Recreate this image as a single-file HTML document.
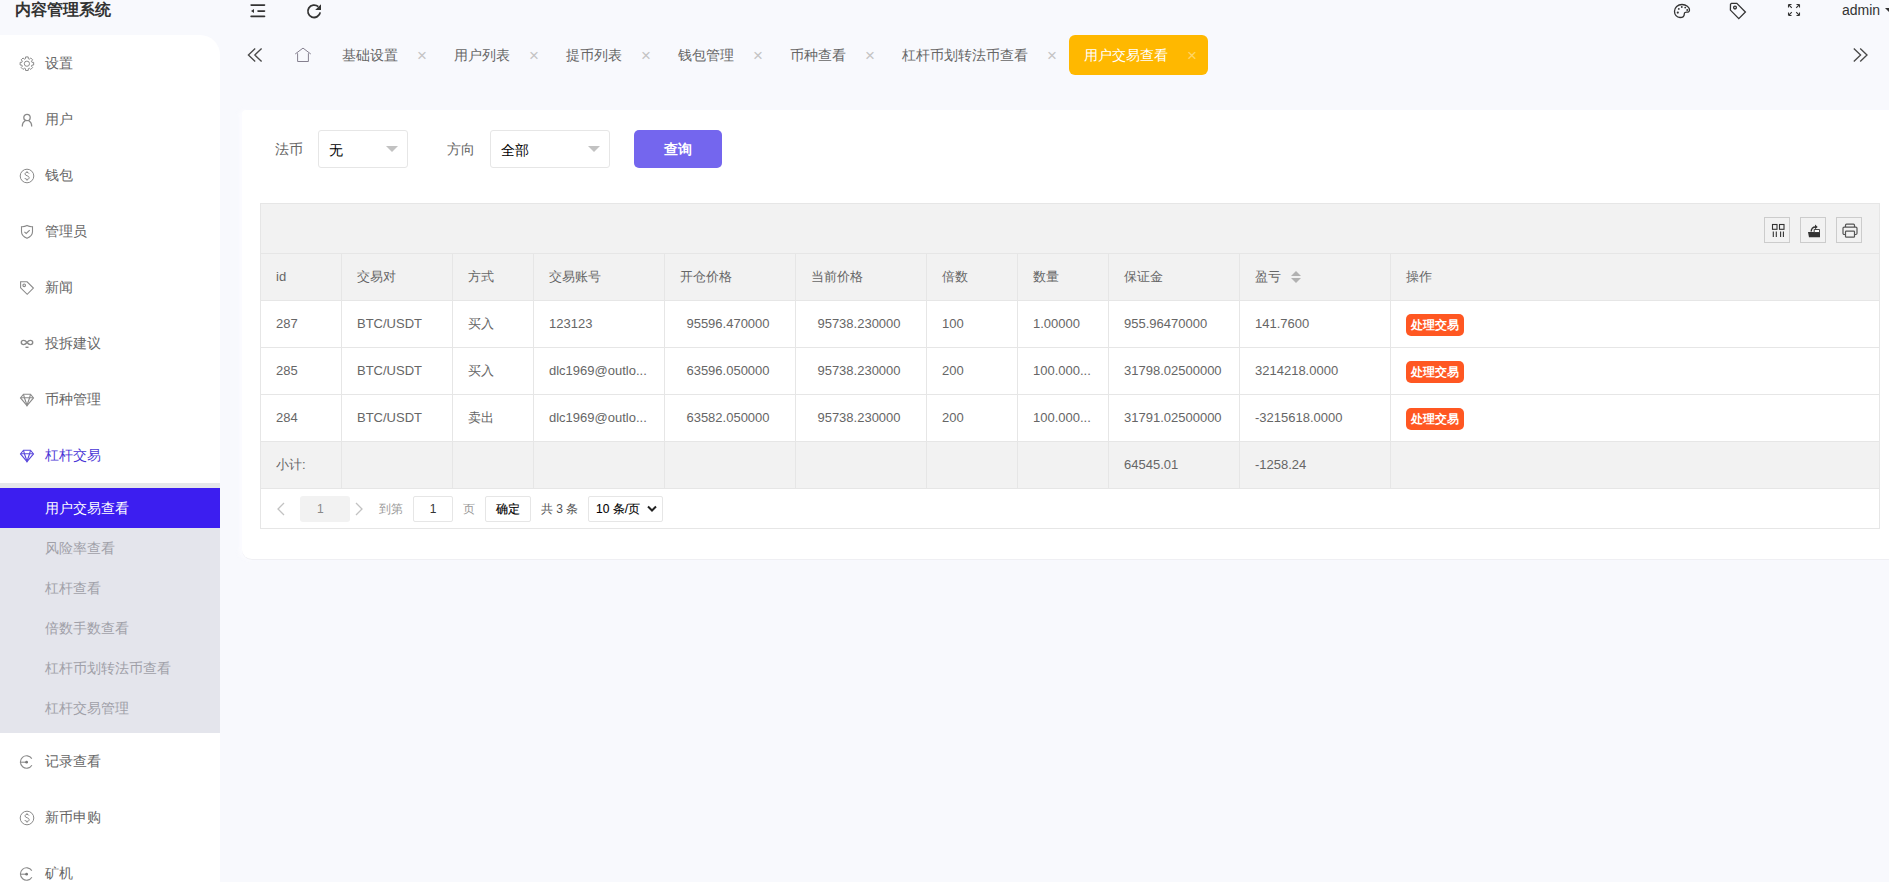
<!DOCTYPE html>
<html><head><meta charset="utf-8"><style>
*{margin:0;padding:0;box-sizing:border-box}
html,body{width:1889px;height:882px;overflow:hidden;background:#f8f9fd;font-family:"Liberation Sans",sans-serif;font-size:14px;color:#666}
div,span{position:absolute}
.nw{white-space:nowrap}
#title{left:15px;top:-1px;font-size:16px;font-weight:bold;color:#333;line-height:22px}
#side{left:0;top:35px;width:220px;height:847px;background:#fff;border-top-right-radius:20px}
.mt{left:45px;line-height:20px;color:#666;white-space:nowrap}
.ic{left:0;top:0}
#sub{left:0;top:483px;width:220px;height:250px;background:#e4e5ec}
#subtop{left:0;top:483px;width:220px;height:5px;background:#e6e7ea}
#subact{left:0;top:488px;width:220px;height:40px;background:#3c1ef0}
.si{left:45px;white-space:nowrap;color:#a0a0a8;line-height:20px}
.tt{top:45px;line-height:20px;white-space:nowrap;color:#666}
.tx{top:46px;line-height:20px;color:#c4c4c4;font-size:17px}
#acttab{left:1069px;top:35px;width:139px;height:40px;background:#ffb800;border-radius:6px}
#card{left:242px;top:110px;width:1700px;height:450px;background:#fff;border-top-left-radius:4px;border-bottom-left-radius:10px;border-bottom:1px solid #efeff3;box-shadow:-3px 0 4px rgba(252,252,255,.9)}
.lbl{top:139px;line-height:20px;color:#666;white-space:nowrap}
.sel{top:130px;height:38px;border:1px solid #e6e6e6;border-radius:3px;background:#fff}
.sel .v{left:10px;top:9px;line-height:20px;color:#000;white-space:nowrap}
.tri{top:15px;width:0;height:0;border-left:6px solid transparent;border-right:6px solid transparent;border-top:6px solid #c2c2c2}
#btn{left:634px;top:130px;width:88px;height:38px;background:#7466ee;border-radius:5px;color:#fff;font-weight:bold;text-align:center;line-height:38px}
.hl{height:1px;background:#e6e6e6}
.vl{width:1px;background:#e6e6e6}
.bgg{background:#f2f2f2}
.ct{font-size:13px;line-height:20px;color:#666;white-space:nowrap}
.op{height:22px;width:58px;line-height:22px;background:#ff5722;color:#fff;border-radius:5px;font-size:12px;font-weight:bold;text-align:center}
.tb{top:217px;width:26px;height:26px;border:1px solid #ccc;background:#f2f2f2}
</style></head><body>
<div id="title" class="nw">内容管理系统</div>
<div id="side"></div>
<svg width="16" height="16" viewBox="0 0 16 16" style="position:absolute;left:19px;top:56px"><g fill="none" stroke="#8a8a8a" stroke-width="1"><path d="M12.90 6.27 L14.67 6.38 L14.67 9.02 L12.90 9.13 L12.45 10.22 L13.62 11.56 L11.76 13.42 L10.42 12.25 L9.33 12.70 L9.22 14.47 L6.58 14.47 L6.47 12.70 L5.38 12.25 L4.04 13.42 L2.18 11.56 L3.35 10.22 L2.90 9.13 L1.13 9.02 L1.13 6.38 L2.90 6.27 L3.35 5.18 L2.18 3.84 L4.04 1.98 L5.38 3.15 L6.47 2.70 L6.58 0.93 L9.22 0.93 L9.33 2.70 L10.42 3.15 L11.76 1.98 L13.62 3.84 L12.45 5.18Z"/><circle cx="7.9" cy="7.7" r="2.6"/></g></svg>
<div class="mt" style="top:53px">设置</div>
<svg width="16" height="16" viewBox="0 0 16 16" style="position:absolute;left:19px;top:112px"><g fill="none" stroke="#8a8a8a" stroke-width="1.3"><circle cx="8" cy="5.5" r="3.2"/><path d="M3.3 14.5c0-3 1.5-5 3-5.6M12.7 14.5c0-3-1.5-5-3-5.6"/></g></svg>
<div class="mt" style="top:109px">用户</div>
<svg width="16" height="16" viewBox="0 0 16 16" style="position:absolute;left:19px;top:168px"><g fill="none" stroke="#8a8a8a" stroke-width="1"><circle cx="8" cy="8" r="6.8"/><path d="M10 5.6c-.3-.8-1-1.2-2-1.2-1.2 0-2 .6-2 1.6 0 2 4.2 1.4 4.2 3.7 0 1-.9 1.7-2.2 1.7-1.1 0-1.9-.5-2.2-1.4M8 3.2v1.2M8 11.4v1.3"/></g></svg>
<div class="mt" style="top:165px">钱包</div>
<svg width="16" height="16" viewBox="0 0 16 16" style="position:absolute;left:19px;top:224px"><g fill="none" stroke="#8a8a8a" stroke-width="1.1"><path d="M8 1.5c1.6.9 3.5 1.3 5.5 1.2v5c0 3-2.3 5.2-5.5 6.6C4.8 12.9 2.5 10.7 2.5 7.7v-5c2 .1 3.9-.3 5.5-1.2z"/><path d="M5.4 7.9l1.8 1.6 3.5-3.4"/></g></svg>
<div class="mt" style="top:221px">管理员</div>
<svg width="16" height="16" viewBox="0 0 16 16" style="position:absolute;left:19px;top:280px"><g fill="none" stroke="#8a8a8a" stroke-width="1.1"><path d="M1.6 1.8h6.5l6.3 6.3-6.2 6.2-6.6-6.5z"/><circle cx="5.2" cy="5.3" r="1.3"/></g></svg>
<div class="mt" style="top:277px">新闻</div>
<svg width="16" height="16" viewBox="0 0 16 16" style="position:absolute;left:19px;top:336px"><g fill="none" stroke="#8a8a8a" stroke-width="1.4"><path d="M8 6.5C6.9 5 5.9 4.4 4.6 4.4 3.3 4.4 2.3 5.3 2.3 6.5s1 2.1 2.3 2.1c1.3 0 2.3-.6 3.4-2.1s2.1-2.1 3.4-2.1c1.3 0 2.3.9 2.3 2.1s-1 2.1-2.3 2.1C10.1 8.6 9.1 8 8 6.5z"/><path d="M6.5 11.3h3"/></g></svg>
<div class="mt" style="top:333px">投拆建议</div>
<svg width="16" height="16" viewBox="0 0 16 16" style="position:absolute;left:19px;top:392px"><g fill="none" stroke="#8a8a8a" stroke-width="1.1"><path d="M4.5 2.2h7l3 3.7L8 13.6 1.5 5.9z"/><path d="M1.8 5.8h12.4M5.4 5.8L8 13.3l2.6-7.5M4.5 2.5l1 3.3M11.5 2.5l-1 3.3"/></g></svg>
<div class="mt" style="top:389px">币种管理</div>
<svg width="16" height="16" viewBox="0 0 16 16" style="position:absolute;left:19px;top:448px"><g fill="none" stroke="#5a48dc" stroke-width="1.1"><path d="M4.5 2.2h7l3 3.7L8 13.6 1.5 5.9z"/><path d="M1.8 5.8h12.4M5.4 5.8L8 13.3l2.6-7.5M4.5 2.5l1 3.3M11.5 2.5l-1 3.3"/></g></svg>
<div class="mt" style="top:445px;color:#4a36d6">杠杆交易</div>
<div id="sub"></div><div id="subtop"></div><div id="subact"></div>
<div class="si" style="top:498px;color:#fff">用户交易查看</div>
<div class="si" style="top:538px">风险率查看</div>
<div class="si" style="top:578px">杠杆查看</div>
<div class="si" style="top:618px">倍数手数查看</div>
<div class="si" style="top:658px">杠杆币划转法币查看</div>
<div class="si" style="top:698px">杠杆交易管理</div>
<svg width="16" height="16" viewBox="0 0 16 16" style="position:absolute;left:19px;top:754px"><g fill="none" stroke="#8a8a8a" stroke-width="1.1"><path d="M12.8 4.6A6.2 6.2 0 1 0 12.9 11.2"/><path d="M1.6 8.2h5.2"/></g><circle cx="7.6" cy="8.2" r="1.4" fill="#777"/></svg>
<div class="mt" style="top:751px">记录查看</div>
<svg width="16" height="16" viewBox="0 0 16 16" style="position:absolute;left:19px;top:810px"><g fill="none" stroke="#8a8a8a" stroke-width="1"><circle cx="8" cy="8" r="6.8"/><path d="M10 5.6c-.3-.8-1-1.2-2-1.2-1.2 0-2 .6-2 1.6 0 2 4.2 1.4 4.2 3.7 0 1-.9 1.7-2.2 1.7-1.1 0-1.9-.5-2.2-1.4M8 3.2v1.2M8 11.4v1.3"/></g></svg>
<div class="mt" style="top:807px">新币申购</div>
<svg width="16" height="16" viewBox="0 0 16 16" style="position:absolute;left:19px;top:866px"><g fill="none" stroke="#8a8a8a" stroke-width="1.1"><path d="M12.8 4.6A6.2 6.2 0 1 0 12.9 11.2"/><path d="M1.6 8.2h5.2"/></g><circle cx="7.6" cy="8.2" r="1.4" fill="#777"/></svg>
<div class="mt" style="top:863px">矿机</div>
<svg width="18" height="18" viewBox="0 0 18 18" style="position:absolute;left:249px;top:0px"><g fill="#333"><rect x="1.3" y="4.2" width="15" height="1.7" rx=".8"/><rect x="8.2" y="10.2" width="8.1" height="1.7" rx=".8"/><rect x="1.3" y="15.6" width="15" height="1.7" rx=".8"/><path d="M2 11l3-2.1v4.2z"/></g></svg>
<svg width="18" height="18" viewBox="0 0 18 18" style="position:absolute;left:305px;top:2px"><g fill="none" stroke="#333" stroke-width="1.8"><path d="M15.2 10.3a6.2 6.2 0 1 1-1.9-5.6"/></g><path d="M16 2.2v5.8h-5.8z" fill="#333"/></svg>
<svg width="20" height="20" viewBox="0 0 20 20" style="position:absolute;left:1672px;top:1px"><g fill="none" stroke="#333" stroke-width="1.3"><path d="M10 3.5c4.3 0 7.5 2.7 7.5 5.6 0 1.6-1.2 2.2-2.6 2.1-1.5-.1-2.6.4-2.6 1.7 0 1.9-1.3 3.6-4.3 3.6-3.3 0-5.5-2.7-5.5-6.3C2.5 6.4 5.7 3.5 10 3.5z"/></g><g fill="#333"><circle cx="5.8" cy="11.6" r="1.1"/><circle cx="6.8" cy="7.9" r=".9"/><circle cx="9.8" cy="6" r=".9"/><circle cx="13.2" cy="6.6" r=".9"/><circle cx="15.2" cy="9" r=".9"/></g></svg>
<svg width="20" height="20" viewBox="0 0 20 20" style="position:absolute;left:1728px;top:1px"><g fill="none" stroke="#333" stroke-width="1.3"><path d="M2.5 3.2l1-.9h5.3l8.6 8.7-6.6 6.6-8.4-8.5z"/><circle cx="7" cy="6.6" r="1.4"/></g></svg>
<svg width="16" height="16" viewBox="0 0 16 16" style="position:absolute;left:1786px;top:2px"><g fill="none" stroke="#333" stroke-width="1.1"><path d="M2.5 2.5l3.3 3.3M2.5 2.5h3M2.5 2.5v3M13.5 2.5l-3.3 3.3M13.5 2.5h-3M13.5 2.5v3M2.5 13.5l3.3-3.3M2.5 13.5h3M2.5 13.5v-3M13.5 13.5l-3.3-3.3M13.5 13.5h-3M13.5 13.5v-3"/></g></svg>
<div class="nw" style="left:1842px;top:0px;line-height:20px;color:#333">admin</div>
<div style="left:1885px;top:8px;width:0;height:0;border-left:4px solid transparent;border-right:4px solid transparent;border-top:4px solid #333"></div>
<svg width="18" height="18" viewBox="0 0 18 18" style="position:absolute;left:246px;top:47px"><g fill="none" stroke="#4a4a4a" stroke-width="1.35"><path d="M9.2 1.4L2.4 8 9.2 14.6M15.6 1.4L8.8 8 15.6 14.6"/></g></svg>
<svg width="18" height="18" viewBox="0 0 18 18" style="position:absolute;left:294px;top:46px"><g fill="none" stroke="#85808f" stroke-width="1"><path d="M1.2 8L9 2.1 16.8 8M3.6 7.2V15.5H14.4V7.2"/></g></svg>
<svg width="18" height="18" viewBox="0 0 18 18" style="position:absolute;left:1851px;top:47px"><g fill="none" stroke="#4a4a4a" stroke-width="1.35"><path d="M2.8 1.4L9.6 8 2.8 14.6M9.2 1.4L16 8 9.2 14.6"/></g></svg>
<div class="tt" style="left:342px">基础设置</div>
<div class="tx" style="left:417px">×</div>
<div class="tt" style="left:454px">用户列表</div>
<div class="tx" style="left:529px">×</div>
<div class="tt" style="left:566px">提币列表</div>
<div class="tx" style="left:641px">×</div>
<div class="tt" style="left:678px">钱包管理</div>
<div class="tx" style="left:753px">×</div>
<div class="tt" style="left:790px">币种查看</div>
<div class="tx" style="left:865px">×</div>
<div class="tt" style="left:902px">杠杆币划转法币查看</div>
<div class="tx" style="left:1047px">×</div>
<div id="acttab"></div>
<div class="tt" style="left:1084px;color:#fff">用户交易查看</div>
<div class="tx" style="left:1187px;color:#ffd566">×</div>
<div id="card"></div>
<div class="lbl" style="left:275px">法币</div>
<div class="sel" style="left:318px;width:90px"><span class="v">无</span><span class="tri" style="left:67px"></span></div>
<div class="lbl" style="left:447px">方向</div>
<div class="sel" style="left:490px;width:120px"><span class="v">全部</span><span class="tri" style="left:97px"></span></div>
<div id="btn">查询</div>
<div class="bgg" style="left:260px;top:203px;width:1619px;height:97px"></div>
<div class="bgg" style="left:260px;top:441px;width:1619px;height:47px"></div>
<div style="left:260px;top:300px;width:1619px;height:141px;background:#fff"></div>
<div class="hl" style="left:260px;top:203px;width:1620px"></div>
<div class="hl" style="left:260px;top:253px;width:1620px"></div>
<div class="hl" style="left:260px;top:300px;width:1620px"></div>
<div class="hl" style="left:260px;top:347px;width:1620px"></div>
<div class="hl" style="left:260px;top:394px;width:1620px"></div>
<div class="hl" style="left:260px;top:441px;width:1620px"></div>
<div class="hl" style="left:260px;top:488px;width:1620px"></div>
<div class="hl" style="left:260px;top:528px;width:1620px"></div>
<div class="vl" style="left:260px;top:203px;height:326px"></div>
<div class="vl" style="left:1879px;top:203px;height:326px"></div>
<div class="vl" style="left:341px;top:253px;height:235px"></div>
<div class="vl" style="left:452px;top:253px;height:235px"></div>
<div class="vl" style="left:533px;top:253px;height:235px"></div>
<div class="vl" style="left:664px;top:253px;height:235px"></div>
<div class="vl" style="left:795px;top:253px;height:235px"></div>
<div class="vl" style="left:926px;top:253px;height:235px"></div>
<div class="vl" style="left:1017px;top:253px;height:235px"></div>
<div class="vl" style="left:1108px;top:253px;height:235px"></div>
<div class="vl" style="left:1239px;top:253px;height:235px"></div>
<div class="vl" style="left:1390px;top:253px;height:235px"></div>
<div class="tb" style="left:1764px"></div>
<div class="tb" style="left:1800px"></div>
<div class="tb" style="left:1836px"></div>
<svg width="26" height="26" viewBox="0 0 26 26" style="position:absolute;left:1764px;top:217px"><g fill="none" stroke="#333" stroke-width="1.1"><rect x="8.5" y="7.5" width="4.5" height="4.8"/><rect x="15.5" y="7.5" width="4.5" height="4.8"/><path d="M9.3 14.5v5.6M12.3 14.5v5.6M16.6 14.5v5.6M19.4 14.5v5.6"/></g></svg>
<svg width="26" height="26" viewBox="0 0 26 26" style="position:absolute;left:1800px;top:217px"><path d="M8 15h12v5.2H9z" fill="#333"/><path d="M14.2 12.5h5.3v3h-5.3z" fill="#fff" stroke="#333" stroke-width=".9"/><path d="M11.2 14.5c0-3 1.6-4.5 4.3-4.5" fill="none" stroke="#333" stroke-width="1.4"/><path d="M15 7.6l2.7 2.4-2.7 2.2z" fill="#333"/></svg>
<svg width="26" height="26" viewBox="0 0 26 26" style="position:absolute;left:1836px;top:217px"><g fill="none" stroke="#555" stroke-width="1.2"><path d="M9.5 10V8.2c0-.6.4-1 1-1h7c.6 0 1 .4 1 1V10"/><path d="M9.5 17.5H8.2c-.7 0-1.2-.5-1.2-1.2v-5c0-.7.5-1.2 1.2-1.2h11.6c.7 0 1.2.5 1.2 1.2v5c0 .7-.5 1.2-1.2 1.2h-1.3"/><rect x="9.5" y="14.2" width="9" height="6"  rx=".8"/></g></svg>
<div class="ct" style="left:276px;top:267px">id</div>
<div class="ct" style="left:357px;top:267px">交易对</div>
<div class="ct" style="left:468px;top:267px">方式</div>
<div class="ct" style="left:549px;top:267px">交易账号</div>
<div class="ct" style="left:680px;top:267px">开仓价格</div>
<div class="ct" style="left:811px;top:267px">当前价格</div>
<div class="ct" style="left:942px;top:267px">倍数</div>
<div class="ct" style="left:1033px;top:267px">数量</div>
<div class="ct" style="left:1124px;top:267px">保证金</div>
<div class="ct" style="left:1255px;top:267px">盈亏</div>
<div class="ct" style="left:1406px;top:267px">操作</div>
<div style="left:1291px;top:271px;width:0;height:0;border-left:5px solid transparent;border-right:5px solid transparent;border-bottom:5px solid #b2b2b2"></div>
<div style="left:1291px;top:278px;width:0;height:0;border-left:5px solid transparent;border-right:5px solid transparent;border-top:5px solid #b2b2b2"></div>
<div class="ct" style="left:276px;top:314px">287</div>
<div class="ct" style="left:357px;top:314px">BTC/USDT</div>
<div class="ct" style="left:468px;top:314px">买入</div>
<div class="ct" style="left:549px;top:314px">123123</div>
<div class="ct" style="left:663px;top:314px;width:130px;text-align:center">95596.470000</div>
<div class="ct" style="left:794px;top:314px;width:130px;text-align:center">95738.230000</div>
<div class="ct" style="left:942px;top:314px">100</div>
<div class="ct" style="left:1033px;top:314px">1.00000</div>
<div class="ct" style="left:1124px;top:314px">955.96470000</div>
<div class="ct" style="left:1255px;top:314px">141.7600</div>
<div class="op" style="left:1406px;top:314px">处理交易</div>
<div class="ct" style="left:276px;top:361px">285</div>
<div class="ct" style="left:357px;top:361px">BTC/USDT</div>
<div class="ct" style="left:468px;top:361px">买入</div>
<div class="ct" style="left:549px;top:361px">dlc1969@outlo...</div>
<div class="ct" style="left:663px;top:361px;width:130px;text-align:center">63596.050000</div>
<div class="ct" style="left:794px;top:361px;width:130px;text-align:center">95738.230000</div>
<div class="ct" style="left:942px;top:361px">200</div>
<div class="ct" style="left:1033px;top:361px">100.000...</div>
<div class="ct" style="left:1124px;top:361px">31798.02500000</div>
<div class="ct" style="left:1255px;top:361px">3214218.0000</div>
<div class="op" style="left:1406px;top:361px">处理交易</div>
<div class="ct" style="left:276px;top:408px">284</div>
<div class="ct" style="left:357px;top:408px">BTC/USDT</div>
<div class="ct" style="left:468px;top:408px">卖出</div>
<div class="ct" style="left:549px;top:408px">dlc1969@outlo...</div>
<div class="ct" style="left:663px;top:408px;width:130px;text-align:center">63582.050000</div>
<div class="ct" style="left:794px;top:408px;width:130px;text-align:center">95738.230000</div>
<div class="ct" style="left:942px;top:408px">200</div>
<div class="ct" style="left:1033px;top:408px">100.000...</div>
<div class="ct" style="left:1124px;top:408px">31791.02500000</div>
<div class="ct" style="left:1255px;top:408px">-3215618.0000</div>
<div class="op" style="left:1406px;top:408px">处理交易</div>
<div class="ct" style="left:276px;top:455px">小计:</div>
<div class="ct" style="left:1124px;top:455px">64545.01</div>
<div class="ct" style="left:1255px;top:455px">-1258.24</div>
<svg width="10" height="14" viewBox="0 0 10 14" style="position:absolute;left:276px;top:502px"><path d="M8 1L2 7l6 6" fill="none" stroke="#c2c2c2" stroke-width="1.3"/></svg>
<div style="left:300px;top:496px;width:50px;height:26px;background:#f2f2f2;border-radius:3px;color:#888;font-size:12px;line-height:26px;padding-left:17px">1</div>
<svg width="10" height="14" viewBox="0 0 10 14" style="position:absolute;left:354px;top:502px"><path d="M2 1l6 6-6 6" fill="none" stroke="#c2c2c2" stroke-width="1.3"/></svg>
<div class="nw" style="left:379px;top:500px;font-size:12px;line-height:18px;color:#999">到第</div>
<div style="left:413px;top:496px;width:40px;height:26px;border:1px solid #e6e6e6;background:#fff;border-radius:2px;color:#333;font-size:12px;line-height:24px;text-align:center">1</div>
<div class="nw" style="left:463px;top:500px;font-size:12px;line-height:18px;color:#999">页</div>
<div style="left:485px;top:496px;width:46px;height:26px;border:1px solid #e6e6e6;background:#fff;border-radius:2px;color:#000;font-size:12px;line-height:24px;text-align:center;-webkit-text-stroke:.15px #000">确定</div>
<div class="nw" style="left:541px;top:500px;font-size:12px;line-height:18px;color:#555">共 3 条</div>
<div style="left:588px;top:496px;width:75px;height:26px;border:1px solid #e6e6e6;background:#fff;border-radius:2px;color:#000;font-size:12px;line-height:24px;padding-left:7px;white-space:nowrap;-webkit-text-stroke:.1px #000">10 条/页</div>
<svg width="12" height="10" viewBox="0 0 12 10" style="position:absolute;left:646px;top:504px"><path d="M2 2.5l4 4 4-4" fill="none" stroke="#222" stroke-width="2"/></svg>
</body></html>
